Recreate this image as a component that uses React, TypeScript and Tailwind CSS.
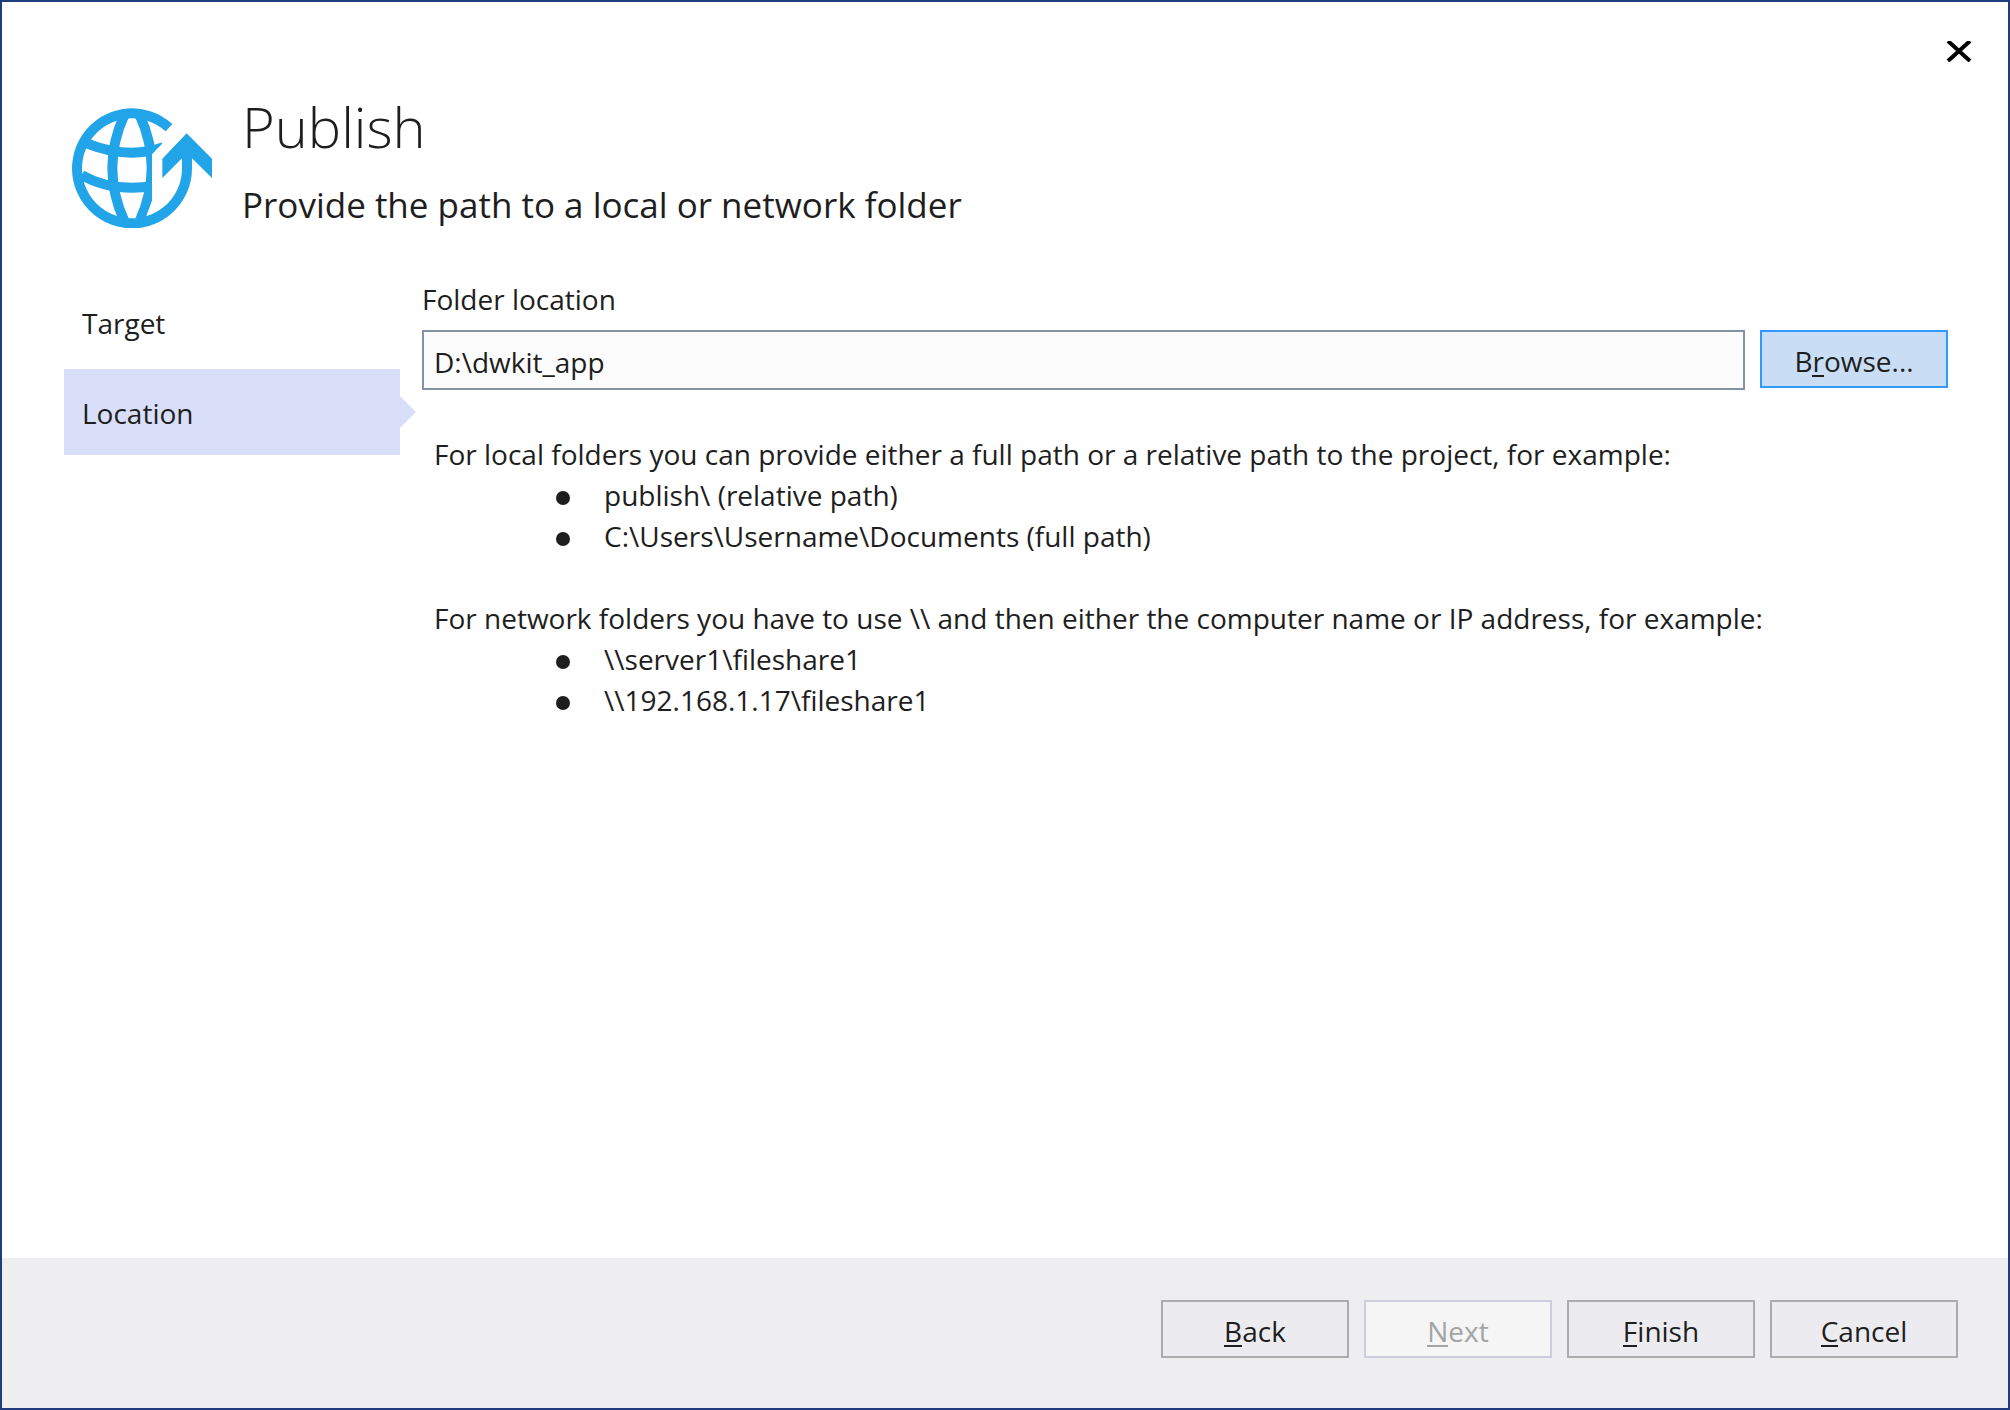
import { useState, type ReactNode } from "react";
import clsx from "clsx";

const steps = ["Target", "Location"];

const hints = [
  {
    intro:
      "For local folders you can provide either a full path or a relative path to the project, for example:",
    examples: [
      "publish\\ (relative path)",
      "C:\\Users\\Username\\Documents (full path)",
    ],
  },
  {
    intro:
      "For network folders you have to use \\\\ and then either the computer name or IP address, for example:",
    examples: ["\\\\server1\\fileshare1", "\\\\192.168.1.17\\fileshare1"],
  },
];

function PublishIcon() {
  return (
    <svg
      className="h-[120px] w-[140px] shrink-0"
      viewBox="66 84 420 360"
      fill="none"
      stroke="#21a4e8"
      strokeWidth="30"
      aria-hidden="true"
    >
      <clipPath id="globe">
        <path d="M60 84H350V178L306 222V362L290 405V444H60Z" />
      </clipPath>
      {/* outer ring, running up into the arrow */}
      <path d="M357 143A165 165 0 1 0 411 264V200" />
      {/* meridians and parallels */}
      <g clipPath="url(#globe)">
        <path d="M222 108C198 160 187 210 187 264C187 318 198 368 222 420" />
        <path d="M270 108C294 160 305 210 305 264C305 318 294 368 270 420" />
        <path d="M110 190Q180 218 246 218Q294 218 340 202" />
        <path d="M95 285Q160 323 246 323Q280 323 310 318" />
      </g>
      <path
        d="M410 160L486 236V294L426 235H396L337 294V236Z"
        fill="#21a4e8"
        stroke="none"
      />
    </svg>
  );
}

type DialogButtonProps = {
  primary?: boolean;
  disabled?: boolean;
  children: ReactNode;
};

function DialogButton({ primary, disabled, children }: DialogButtonProps) {
  return (
    <button
      type="button"
      disabled={disabled}
      className={clsx(
        "h-[58px] w-[188px] shrink-0 border-2 pt-1",
        primary && "border-[#3399ff] bg-[#c9def5]",
        disabled && "border-[#cccedb] bg-[#f5f5f5] text-[#a2a4a5]",
        !primary && !disabled && "border-[#acacac] bg-[#ececf0]"
      )}
    >
      {children}
    </button>
  );
}

// Underlined access key
function Key({ children }: { children: ReactNode }) {
  return (
    <span className="inline-block h-[30px] border-b-2 border-current leading-none">
      {children}
    </span>
  );
}

export default function App() {
  const [step, setStep] = useState("Location");
  const [folder, setFolder] = useState("D:\\dwkit_app");

  return (
    <div className="flex min-h-screen flex-col border-2 border-[#1f3d7d] bg-white font-['Open_Sans','Noto_Sans',sans-serif] text-[28px] leading-[41px] text-[#1e1e1e]">
      <div className="flex justify-end pt-[39px] pr-9">
        <button type="button" aria-label="Close" className="text-black">
          <svg
            className="h-[21px] w-[26px]"
            viewBox="0 0 26 21"
            fill="none"
            stroke="currentColor"
            strokeWidth="4"
          >
            <path d="M2 0L24 20M24 0L2 20" />
          </svg>
        </button>
      </div>

      <header className="flex gap-[30px] pt-6 pl-[70px]">
        <div className="pt-[22px]">
          <PublishIcon />
        </div>
        <div>
          <h1 className="text-[56px] leading-[80px] font-light">Publish</h1>
          <p className="pt-[15px] text-[35px] leading-[48px]">
            Provide the path to a local or network folder
          </p>
        </div>
      </header>

      <main className="flex flex-1 gap-[22px] pt-[50px] pr-[60px] pl-[62px]">
        <nav className="flex w-[336px] shrink-0 flex-col gap-1">
          {steps.map((name) => (
            <button
              key={name}
              type="button"
              onClick={() => setStep(name)}
              className={clsx(
                "relative h-[86px] pt-[2px] pl-[18px] text-left",
                step === name && "bg-[#dadff9]"
              )}
            >
              {name}
              {step === name && (
                <span className="absolute top-[27px] left-full border-y-16 border-l-16 border-y-transparent border-l-[#dadff9]" />
              )}
            </button>
          ))}
        </nav>

        <section className="min-w-0 flex-1">
          <label htmlFor="folder" className="block">
            Folder location
          </label>
          <div className="flex gap-[15px] pt-[10px]">
            <input
              id="folder"
              type="text"
              value={folder}
              onChange={(e) => setFolder(e.target.value)}
              className="h-[60px] min-w-0 flex-1 border-2 border-[#8591a5] bg-[#fcfcfc] px-[10px] pt-1 outline-none"
            />
            <DialogButton primary>
              B<Key>r</Key>owse...
            </DialogButton>
          </div>

          <div className="flex flex-col gap-[41px] pt-11 pl-3">
            {hints.map((hint) => (
              <div key={hint.intro}>
                <p>{hint.intro}</p>
                <ul className="pl-[122px]">
                  {hint.examples.map((example) => (
                    <li key={example} className="flex items-center gap-[34px]">
                      <span className="mt-1 size-[14px] rounded-full bg-[#1e1e1e]" />
                      {example}
                    </li>
                  ))}
                </ul>
              </div>
            ))}
          </div>
        </section>
      </main>

      <footer className="flex justify-end gap-[15px] bg-[#eeeef0] pt-[42px] pr-[50px] pb-[50px]">
        <DialogButton>
          <Key>B</Key>ack
        </DialogButton>
        <DialogButton disabled>
          <Key>N</Key>ext
        </DialogButton>
        <DialogButton>
          <Key>F</Key>inish
        </DialogButton>
        <DialogButton>
          <Key>C</Key>ancel
        </DialogButton>
      </footer>
    </div>
  );
}
